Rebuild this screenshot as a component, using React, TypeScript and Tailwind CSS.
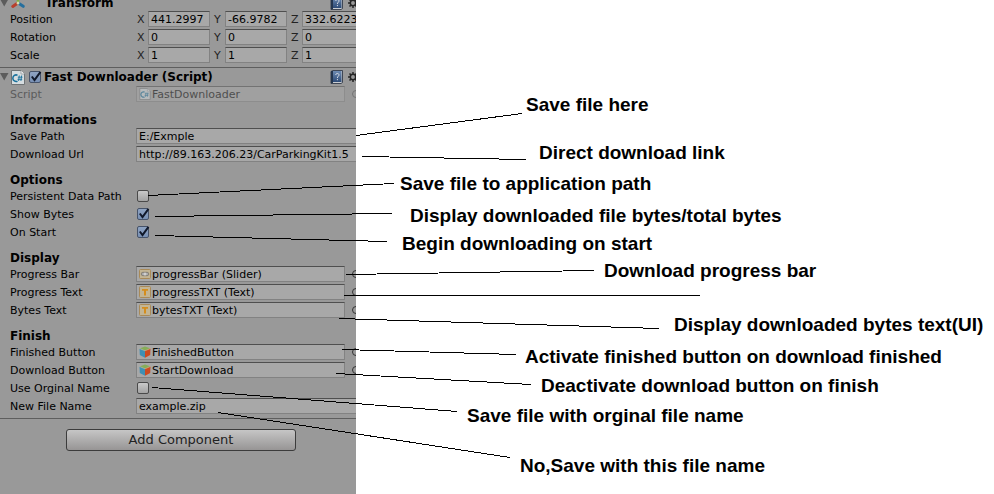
import type { ReactNode } from 'react';

const fieldBox =
  'h-4 rounded-none border border-[#828282] border-t-[#4f4f4f] bg-[#a8a8a8] text-[11px] text-black outline-none';

function Arrow() {
  return (
    <svg viewBox="0 0 9 8" className="h-2 w-[9px] shrink-0" aria-hidden="true">
      <path d="M0 0H8.500L4.200 7.500Z" fill="#5c5c5c" />
    </svg>
  );
}

function ScriptIcon({ small = false }: { small?: boolean }) {
  return (
    <svg viewBox="0 0 14 15" className={`shrink-0 ${small ? 'size-3' : 'h-[15px] w-[14px]'}`} aria-hidden="true">
      <path d="M.5.5H10L13.500 4V14.500H.5Z" fill="#d6dde0" stroke="#707476" />
      <path d="M10 .5V4H13.500" fill="#f2f2f2" stroke="#8a8f92" strokeWidth=".7" />
      <path d="M6.500 5.200A3.300 3.300 0 1 0 6.500 11.200" fill="none" stroke="#17709b" strokeWidth="1.500" />
      <path d="M8.300 5.500 7.600 11M10.600 5.500 9.900 11M6.800 7.200H11.500M6.500 9.300H11.200" stroke="#17709b" strokeWidth=".9" />
    </svg>
  );
}

function AxesIcon() {
  return (
    <svg viewBox="0 0 14 15" className="h-[15px] w-[14px] shrink-0" aria-hidden="true">
      <path d="M7 7V1" stroke="#7fae3e" strokeWidth="2.600" />
      <path d="M6 7.500 1.800 10.500" stroke="#b8402c" strokeWidth="3" strokeLinecap="round" />
      <path d="M8 7.500 12.200 10.300" stroke="#256f9e" strokeWidth="3" strokeLinecap="round" />
      <circle cx="7" cy="7" r="1.500" fill="#d8dcb0" />
    </svg>
  );
}

function HelpIcon() {
  return (
    <svg viewBox="0 0 13 14" className="h-[14px] w-[13px] shrink-0" aria-hidden="true">
      <defs>
        <linearGradient id="book" x1="0" y1="0" x2="0" y2="1">
          <stop offset="0" stopColor="#6f8cb3" />
          <stop offset="1" stopColor="#2c4a76" />
        </linearGradient>
      </defs>
      <path d="M1 1.500 3 .5H12.500V12.500L11 13.500H1Z" fill="#c9ccd0" stroke="#222c3c" strokeWidth=".8" />
      <path d="M1 1H3V13H1Z" fill="#24364f" />
      <path d="M3 1H11.500V12H3Z" fill="url(#book)" />
      <path d="M5.700 5C5.700 3 9.100 3 9 5 8.900 6.300 7.400 6.400 7.400 8M7.400 9V10.200" fill="none" stroke="#d5dbe4" strokeWidth="1" />
    </svg>
  );
}

function GearIcon() {
  return (
    <svg viewBox="0 0 10 10" className="size-[10px] shrink-0" aria-hidden="true">
      <circle cx="5" cy="5" r="2.700" fill="none" stroke="#262626" strokeWidth="1.500" />
      <path d="M5 0V2M5 8V10M0 5H2M8 5H10M1.500 1.500 2.900 2.900M7.100 7.100 8.500 8.500M1.500 8.500 2.900 7.100M7.100 2.900 8.500 1.500" stroke="#262626" strokeWidth="1.500" />
    </svg>
  );
}

function HeaderTools() {
  return (
    <span className="-mr-0.5 flex shrink-0 items-center gap-[5px]">
      <HelpIcon />
      <GearIcon />
    </span>
  );
}

function SliderIcon() {
  return (
    <svg viewBox="0 0 12 12" className="size-3 shrink-0" aria-hidden="true">
      <rect x=".5" y="1.500" width="11" height="9" rx="1" fill="#c3b594" stroke="#a98a58" />
      <rect x="2.300" y="4.300" width="7.400" height="3.400" rx="1.600" fill="#a9a9a9" stroke="#77736a" strokeWidth=".8" />
      <circle cx="6" cy="6" r="1.500" fill="#d0d0d0" />
    </svg>
  );
}

function TextIcon() {
  return (
    <svg viewBox="0 0 12 12" className="size-3 shrink-0" aria-hidden="true">
      <rect x=".5" y=".5" width="11" height="11" rx="1" fill="#c3b594" stroke="#a98a58" />
      <path d="M3 3H9V4.800H7V9.500H5V4.800H3Z" fill="#d58d1c" />
    </svg>
  );
}

function CubeIcon() {
  return (
    <svg viewBox="0 0 12 12" className="size-3 shrink-0" aria-hidden="true">
      <path d="M6 .5 11.500 2.500 6 4.800.5 2.500Z" fill="#86ad57" />
      <path d="M.5 2.500 6 4.800V11.700L.8 9Z" fill="#3e8fb4" />
      <path d="M11.500 2.500 6 4.800V11.700L11.200 9Z" fill="#cc4a20" />
      <path d="M.5 2.500 6 4.800 11.500 2.500" fill="none" stroke="#d8c79c" strokeWidth=".5" />
    </svg>
  );
}

function Tick({ id, label, on = false }: { id: string; label?: string; on?: boolean }) {
  return (
    <span className="grid h-[13px] w-[13px] shrink-0">
      <input
        id={id}
        type="checkbox"
        aria-label={label}
        defaultChecked={on}
        className="peer col-start-1 row-start-1 size-3 appearance-none rounded-xs border border-[#4a4a4a] bg-linear-to-b from-[#c9c9c9] to-[#a3a3a3] checked:border-[#46536a] checked:from-[#8ea3c2] checked:to-[#7890b4]"
      />
      <svg viewBox="0 0 13 13" className="pointer-events-none invisible col-start-1 row-start-1 size-[13px] peer-checked:visible" aria-hidden="true">
        <path d="M2.800 5.500 5.500 9 11.500.8" fill="none" stroke="#10182a" strokeWidth="2" />
      </svg>
    </span>
  );
}

function Heading({ children }: { children: ReactNode }) {
  return <h3 className="h-6 pt-2 pl-[10px] text-xs leading-4 font-bold">{children}</h3>;
}

function Row({ id, label, muted = false, children }: { id: string; label: string; muted?: boolean; children: ReactNode }) {
  return (
    <div className="flex h-[18px] items-start pl-[10px]">
      <label htmlFor={id} className={`w-[126px] shrink-0 leading-[18px] whitespace-nowrap ${muted ? 'text-[#5c5c5c]' : ''}`}>
        {label}
      </label>
      {children}
    </div>
  );
}

function TextRow({ id, label, value }: { id: string; label: string; value: string }) {
  return (
    <Row id={id} label={label}>
      <input id={id} defaultValue={value} className={`${fieldBox} min-w-0 flex-1 border-r-0 pl-0.5 leading-[14px]`} />
    </Row>
  );
}

function TickRow({ id, label, on }: { id: string; label: string; on?: boolean }) {
  return (
    <Row id={id} label={label}>
      <span className="flex h-4 items-center pl-px">
        <Tick id={id} on={on} />
      </span>
    </Row>
  );
}

function ObjectRow({ id, label, value, icon, muted = false }: { id: string; label: string; value: string; icon: ReactNode; muted?: boolean }) {
  return (
    <Row id={id} label={label} muted={muted}>
      <button
        id={id}
        disabled={muted}
        className={`${fieldBox} flex w-[209px] shrink-0 items-start gap-px pl-0.5 leading-4 ${muted ? 'opacity-50' : ''}`}
      >
        <span className="pt-px">{icon}</span>
        <span>{value}</span>
      </button>
      <span className={`mt-1 ml-[7px] size-2 shrink-0 rounded-full border ${muted ? 'border-[#757575]' : 'border-[#333]'}`} />
    </Row>
  );
}

function VectorRow({ label, values }: { label: string; values: string[] }) {
  return (
    <div role="group" aria-label={label} className="flex h-[18px] items-start pl-[10px]">
      <span className="w-[127px] shrink-0 leading-[18px]">{label}</span>
      {['X', 'Y', 'Z'].map((axis, i) => (
        <label key={axis} className="mr-1 flex shrink-0 leading-[18px]">
          <span className="w-[11px] text-[#222]">{axis}</span>
          <input defaultValue={values[i]} className={`${fieldBox} w-[62px] pl-0.5 leading-[14px]`} />
        </label>
      ))}
    </div>
  );
}

function Inspector() {
  return (
    <section className="w-[356px] shrink-0 overflow-hidden bg-[#999] text-[11px]">
      <header className="flex h-[11px] items-end overflow-hidden">
        <span className="flex h-4 w-full shrink-0 items-center">
          <Arrow />
          <span className="ml-0.5">
            <AxesIcon />
          </span>
          <h2 className="ml-5 flex-1 text-xs leading-4 font-bold">Transform</h2>
          <HeaderTools />
        </span>
      </header>
      <VectorRow label="Position" values={['441.2997', '-66.9782', '332.6223']} />
      <VectorRow label="Rotation" values={['0', '0', '0']} />
      <VectorRow label="Scale" values={['1', '1', '1']} />

      <header className="mt-0.5 flex h-[19px] items-center border-t border-[#5e5e5e]">
        <Arrow />
        <span className="ml-0.5">
          <ScriptIcon />
        </span>
        <span className="ml-1">
          <Tick id="enabled" label="Enable Fast Downloader" on />
        </span>
        <h2 className="ml-0.5 flex-1 text-xs leading-4 font-bold whitespace-nowrap">Fast Downloader (Script)</h2>
        <HeaderTools />
      </header>
      <ObjectRow id="script" label="Script" value="FastDownloader" icon={<ScriptIcon small />} muted />

      <Heading>Informations</Heading>
      <TextRow id="save-path" label="Save Path" value="E:/Exmple" />
      <TextRow id="url" label="Download Url" value="http://89.163.206.23/CarParkingKit1.5" />

      <Heading>Options</Heading>
      <TickRow id="persistent" label="Persistent Data Path" />
      <TickRow id="show-bytes" label="Show Bytes" on />
      <TickRow id="on-start" label="On Start" on />

      <Heading>Display</Heading>
      <ObjectRow id="progress-bar" label="Progress Bar" value="progressBar (Slider)" icon={<SliderIcon />} />
      <ObjectRow id="progress-text" label="Progress Text" value="progressTXT (Text)" icon={<TextIcon />} />
      <ObjectRow id="bytes-text" label="Bytes Text" value="bytesTXT (Text)" icon={<TextIcon />} />

      <Heading>Finish</Heading>
      <ObjectRow id="finished" label="Finished Button" value="FinishedButton" icon={<CubeIcon />} />
      <ObjectRow id="download" label="Download Button" value="StartDownload" icon={<CubeIcon />} />
      <TickRow id="original-name" label="Use Orginal Name" />
      <TextRow id="file-name" label="New File Name" value="example.zip" />

      <div className="mt-0.5 flex justify-center border-t border-[#5e5e5e] pt-[10px] pl-[6px]">
        <button className="h-[22px] w-[230px] rounded-[3px] border border-[#3c3c3c] bg-linear-to-b from-[#c6c6c6] to-[#979595] text-[13px] leading-5 text-[#222]">
          Add Component
        </button>
      </div>
    </section>
  );
}

const notes = [
  { text: 'Save file here', at: 'left-[526px] top-[94px]', line: [356, 135, 522, 113] },
  { text: 'Direct download link', at: 'left-[539px] top-[142px]', line: [362, 156, 526, 159] },
  { text: 'Save file to application path', at: 'left-[400px] top-[173px]', line: [148, 195, 394, 183] },
  { text: 'Display downloaded file bytes/total bytes', at: 'left-[410px] top-[205px]', line: [155, 216, 392, 213] },
  { text: 'Begin downloading on start', at: 'left-[402px] top-[233px]', line: [155, 235, 387, 241] },
  { text: 'Download progress bar', at: 'left-[604px] top-[260px]', line: [346, 274, 594, 270] },
  { text: '', at: '', line: [344, 295, 700, 295] },
  { text: 'Display downloaded bytes text(UI)', at: 'left-[674px] top-[314px]', line: [339, 318, 659, 328] },
  { text: 'Activate finished button on download finished', at: 'left-[525px] top-[346px]', line: [342, 349, 516, 354] },
  { text: 'Deactivate download button on finish', at: 'left-[541px] top-[375px]', line: [336, 373, 531, 384] },
  { text: 'Save file with orginal file name', at: 'left-[467px] top-[405px]', line: [152, 387, 457, 411] },
  { text: 'No,Save with this file name', at: 'left-[520px] top-[455px]', line: [218, 412, 510, 457] },
];

export default function App() {
  return (
    <main className="relative flex min-h-screen overflow-hidden bg-white font-['DejaVu_Sans',Verdana,sans-serif] text-black">
      <Inspector />
      <svg className="pointer-events-none absolute inset-0 size-full" shapeRendering="crispEdges" aria-hidden="true">
        {notes.map(({ line: [x1, y1, x2, y2] }) => (
          <path key={y1} d={`M${x1} ${y1 + 0.5}L${x2} ${y2 + 0.5}`} stroke="#000" />
        ))}
      </svg>
      {notes
        .filter((note) => note.text)
        .map((note) => (
          <p key={note.text} className={`absolute font-['Liberation_Sans',Arial,sans-serif] text-[19px] leading-[22px] font-bold whitespace-nowrap ${note.at}`}>
            {note.text}
          </p>
        ))}
    </main>
  );
}
